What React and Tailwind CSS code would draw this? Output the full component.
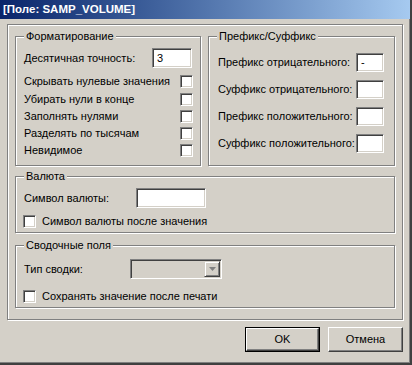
import React from 'react';

const sunken = 'bg-white border border-t-[#808080] border-l-[#808080] border-b-white border-r-white shadow-[inset_1px_1px_0_#404040,inset_-1px_-1px_0_#d4d0c8]';

function Group({ title, className, children }) {
  return (
    <div className={`relative border border-[#808080] shadow-[inset_1px_1px_0_#fff,1px_1px_0_#fff] ${className}`}>
      <span className="absolute left-[8px] top-[-8px] bg-[#d4d0c8] px-[2px] leading-[14px] whitespace-nowrap">{title}</span>
      {children}
    </div>
  );
}

function CheckBox() {
  return <div className={`w-[13px] h-[13px] shrink-0 ${sunken}`} />;
}

function TextBox({ className, value }) {
  return (
    <div className={`${sunken} flex items-center pl-[4px] shrink-0 ${className}`}>
      {value}
    </div>
  );
}

function Button({ label, isDefault }) {
  const inner = (
    <div className="w-full h-full flex items-center justify-center border border-t-white border-l-white border-b-[#404040] border-r-[#404040] shadow-[inset_-1px_-1px_0_#808080]">
      {label}
    </div>
  );
  return isDefault ? (
    <div className="w-[75px] h-[25px] border border-black">{inner}</div>
  ) : (
    <div className="w-[75px] h-[25px]">{inner}</div>
  );
}

export default function App() {
  const checks = [
    { label: 'Скрывать нулевые значения', mt: 'mt-[7px]' },
    { label: 'Убирать нули в конце', mt: 'mt-[5px]' },
    { label: 'Заполнять нулями', mt: 'mt-[4px]' },
    { label: 'Разделять по тысячам', mt: 'mt-[4px]' },
    { label: 'Невидимое', mt: 'mt-[4px]' },
  ];
  const affixes = [
    { label: 'Префикс отрицательного:', value: '-' },
    { label: 'Суффикс отрицательного:', value: '' },
    { label: 'Префикс положительного:', value: '' },
    { label: 'Суффикс положительного:', value: '' },
  ];

  return (
    <div className="w-[412px] h-[365px] bg-[#d4d0c8] text-[11px] text-black font-['Liberation_Sans',Arial,sans-serif] whitespace-nowrap border-r-2 border-b-2 border-r-[#404040] border-b-[#404040] shadow-[inset_-1px_-1px_0_#808080] overflow-hidden">
      {/* title bar */}
      <div className="h-[19px] bg-gradient-to-r from-[#0a246a] to-[#a6caf0] flex items-center pl-[3px] text-white font-bold text-[11.5px]">
        [Поле: SAMP_VOLUME]
      </div>

      {/* outer frame */}
      <div className="ml-[7px] mt-[5px] w-[396px] h-[296px] border border-[#808080] shadow-[inset_1px_1px_0_#fff,1px_1px_0_#fff] pl-[7px] pr-[7px] pt-[11px]">
        <div className="flex gap-[7px]">
          <Group title="Форматирование" className="w-[186px] h-[130px] pl-[8px] pr-[7px] pt-[11px]">
            <div className="flex items-center justify-between h-[20px]">
              <span>Десятичная точность:</span>
              <TextBox className="w-[40px] h-[20px] mr-[1px]" value="3" />
            </div>
            {checks.map((c) => (
              <div key={c.label} className={`flex items-center justify-between h-[13px] ${c.mt}`}>
                <span>{c.label}</span>
                <CheckBox />
              </div>
            ))}
          </Group>

          <Group title="Префикс/Суффикс" className="w-[187px] h-[130px] pl-[9px] pr-[10px] pt-[16px]">
            <div className="flex flex-col gap-[8px]">
              {affixes.map((a) => (
                <div key={a.label} className="flex items-center justify-between h-[19px]">
                  <span>{a.label}</span>
                  <TextBox className="w-[28px] h-[19px] leading-none" value={a.value} />
                </div>
              ))}
            </div>
          </Group>
        </div>

        <Group title="Валюта" className="mt-[10px] h-[57px] pl-[8px] pt-[11px]">
          <div className="flex items-center justify-between w-[182px] h-[20px]">
            <span>Символ валюты:</span>
            <div className={`w-[70px] min-w-[70px] max-w-[70px] h-[20px] shrink-0 ${sunken}`} />
          </div>
          <div className="flex items-center gap-[6px] mt-[5px] -ml-[1px]">
            <CheckBox />
            <span>Символ валюты после значения</span>
          </div>
        </Group>

        <Group title="Сводочные поля" className="mt-[12px] h-[63px] pl-[8px] pt-[13px]">
          <div className="flex items-center justify-between w-[198px] h-[20px]">
            <span>Тип сводки:</span>
            <div className="w-[92px] h-[20px] bg-[#d4d0c8] border border-t-[#808080] border-l-[#808080] border-b-white border-r-white shadow-[inset_1px_1px_0_#404040,inset_-1px_-1px_0_#d4d0c8] flex justify-end p-[1px]">
              <div className="w-[16px] h-full flex items-center justify-center border border-t-[#d4d0c8] border-l-[#d4d0c8] border-b-[#404040] border-r-[#404040] shadow-[inset_1px_1px_0_#fff,inset_-1px_-1px_0_#808080]">
                <svg width="7" height="4" viewBox="0 0 7 4">
                  <path d="M0 0h7L3.5 4z" fill="#808080" />
                </svg>
              </div>
            </div>
          </div>
          <div className="flex items-center gap-[6px] mt-[9px] -ml-[1px]">
            <CheckBox />
            <span>Сохранять значение после печати</span>
          </div>
        </Group>
      </div>

      {/* buttons */}
      <div className="flex justify-end gap-[8px] pr-[7px] mt-[7px]">
        <Button label="OK" isDefault />
        <Button label="Отмена" />
      </div>
    </div>
  );
}
